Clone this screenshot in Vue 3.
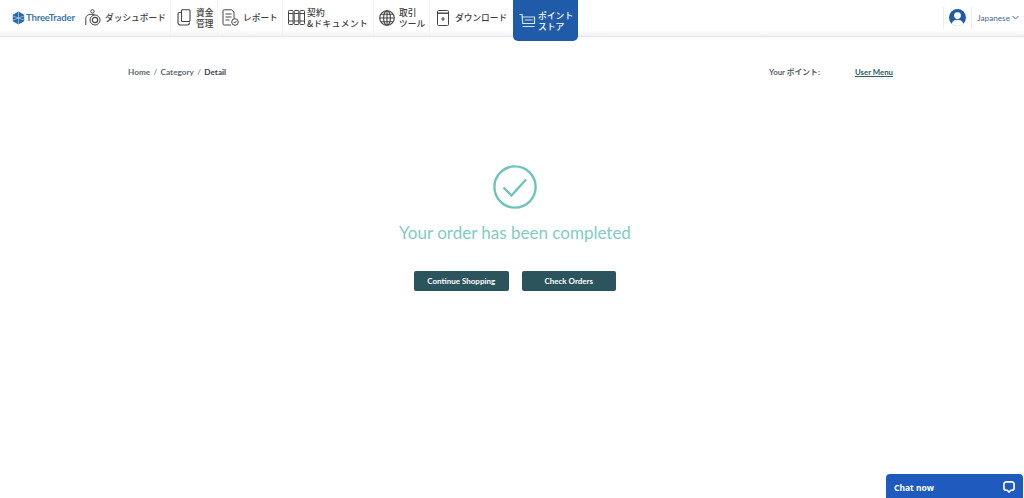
<script setup>
const crumbs = ['Home', 'Category', 'Detail']
</script>

<template>
  <div class="page">
    <header class="topbar">
      <div class="logo">
        <svg width="13" height="14" viewBox="0 0 13 14">
          <path d="M6.5 .5 12.2 3.7V10.3L6.5 13.5 .8 10.3V3.7Z" fill="#2c6aa6" />
          <path d="M6.5 .5V13.5M.8 5 12.2 9M12.2 5 .8 9" stroke="#cfe0ef" stroke-width=".6" />
        </svg>
        <span>ThreeTrader</span>
      </div>

      <nav class="nav">
        <a class="item dash">
          <svg width="16" height="17" viewBox="0 0 16 17" fill="none" stroke="#444" stroke-width="1">
            <circle cx="10" cy="11" r="5" />
            <circle cx="10" cy="11" r="2.7" stroke-width="1.2" />
            <circle cx="7.5" cy="2.4" r="1.7" />
            <path d="M.8 16V9.5C.8 6.8 3 5.4 5.8 5.4H9.5" />
          </svg>
          <span>ダッシュボード</span>
        </a>
        <a class="item funds">
          <svg width="14" height="17" viewBox="0 0 14 17" fill="none" stroke="#444" stroke-width="1.1">
            <path d="M4.5 3.5H2.5A1.5 1.5 0 0 0 1 5V13.5A2.5 2.5 0 0 0 3.5 16H10A2.5 2.5 0 0 0 12.5 13.5" />
            <path d="M4.5 1.5A1 1 0 0 1 5.5 .8H12A1 1 0 0 1 13 1.8V11.5A1 1 0 0 1 12 12.5H5.5A1 1 0 0 1 4.5 11.5Z" />
          </svg>
          <span class="two">資金<br />管理</span>
        </a>
        <a class="item report">
          <svg width="17" height="17" viewBox="0 0 17 17" fill="none" stroke="#444" stroke-width="1">
            <path d="M12 9.5V3L9.5 .8H2.2A1.2 1.2 0 0 0 1 2V14.8A1.2 1.2 0 0 0 2.2 16H9" />
            <path d="M3.5 5H9.5M3.5 8H9.5M3.5 11H7.5" />
            <circle cx="13" cy="13" r="3.3" />
            <path d="M11.6 13 12.7 14.1 14.5 12" />
          </svg>
          <span>レポート</span>
        </a>
        <a class="item docs">
          <svg width="17" height="15" viewBox="0 0 17 15" fill="none" stroke="#444" stroke-width="1">
            <rect x=".5" y=".5" width="4.6" height="14" rx=".8" />
            <rect x="6.2" y=".5" width="4.6" height="14" rx=".8" />
            <rect x="11.9" y=".5" width="4.6" height="14" rx=".8" />
            <path d="M.5 3.5H5M6.2 3.5H10.8M11.9 3.5H16.5M.5 11H5M6.2 11H10.8M11.9 11H16.5" />
          </svg>
          <span class="two spaced">契約<br />&amp;ドキュメント</span>
        </a>
        <a class="item tools">
          <svg width="16" height="16" viewBox="0 0 16 16" fill="none" stroke="#444" stroke-width="1.1">
            <circle cx="8" cy="8" r="7.3" />
            <ellipse cx="8" cy="8" rx="3.4" ry="7.3" />
            <path d="M8 .7V15.3M.7 8H15.3M1.8 4.2H14.2M1.8 11.8H14.2" />
          </svg>
          <span class="two">取引<br />ツール</span>
        </a>
        <a class="item download">
          <svg width="12" height="16" viewBox="0 0 12 16" fill="none" stroke="#444" stroke-width="1">
            <rect x=".5" y=".5" width="11" height="15" rx="1" />
            <path d="M.5 3.2H11.5" stroke-width="1.4" />
            <path d="M6 7V11M4.2 9H7.8" />
          </svg>
          <span>ダウンロード</span>
        </a>
        <a class="store">
          <svg width="17" height="15" viewBox="0 0 17 15" fill="none" stroke="#d8e6f5" stroke-width="1.2">
            <path d="M.5 1.5H3L3.8 10.5H15.5V4H3.2" />
            <path d="M5.8 7H13.5M3.5 13.5H15.5" />
          </svg>
          <span>ポイント<br />ストア</span>
        </a>
      </nav>

      <div class="account">
        <span class="avatar">
          <svg width="17" height="17" viewBox="0 0 18 18">
            <circle cx="9" cy="9" r="9" fill="#1f5ba8" />
            <circle cx="9" cy="7" r="3.6" fill="#fff" />
            <path d="M2.8 15.5C4 12.2 6.3 11.4 9 11.4S14 12.2 15.2 15.5A9 9 0 0 1 2.8 15.5Z" fill="#fff" />
          </svg>
        </span>
        <span class="lang">Japanese</span>
        <svg class="chev" width="7" height="5" viewBox="0 0 7 5" fill="none" stroke="#4a6a8c" stroke-width="1">
          <path d="M.5 1 3.5 4 6.5 1" />
        </svg>
      </div>
    </header>

    <div class="subbar">
      <div class="crumbs">
        <template v-for="(c, i) in crumbs" :key="c">
          <span :class="{ current: i === crumbs.length - 1 }">{{ c }}</span>
          <span v-if="i < crumbs.length - 1" class="slash">/</span>
        </template>
      </div>
      <div class="points">
        <span>Your ポイント:</span>
        <a class="menu">User Menu</a>
      </div>
    </div>

    <main class="done">
      <svg width="44" height="44" viewBox="0 0 44 44" fill="none" stroke="#6fc4ba">
        <circle cx="22" cy="22" r="20.6" stroke-width="2.4" />
        <path d="M10.5 22.5 18.5 30.5 33 14.5" stroke-width="2.4" />
      </svg>
      <h1>Your order has been completed</h1>
      <div class="actions">
        <button>Continue Shopping</button>
        <button>Check Orders</button>
      </div>
    </main>

    <div class="chat">
      <span>Chat now</span>
      <svg width="12" height="12" viewBox="0 0 13 13" fill="none" stroke="#fff" stroke-width="1.8">
        <path d="M3.5 1H9.5A2.5 2.5 0 0 1 12 3.5V7.5A2.5 2.5 0 0 1 9.5 10H8.5L6.5 12 4.5 10H3.5A2.5 2.5 0 0 1 1 7.5V3.5A2.5 2.5 0 0 1 3.5 1Z" />
      </svg>
    </div>
  </div>
</template>

<style>
body {
  background: #fff;
  overflow: hidden;
}
</style>

<style scoped>
.page {
  position: relative;
  height: 498px;
  overflow: hidden;
  font-family: Lato, "Noto Sans CJK JP", sans-serif;
  color: #444;
}

.topbar {
  display: flex;
  align-items: flex-start;
  height: 36px;
  padding-left: 12px;
  background: linear-gradient(#fff 84%, #f1f2f4);
  box-shadow: 0 1px 1px #e6e8ea;
}

.logo {
  display: flex;
  align-items: center;
  width: 73px;
  height: 35px;
  flex: none;
  gap: 1px;
  font-size: 9.6px;
  font-weight: 700;
  letter-spacing: -0.2px;
  color: #3f79ad;
}

.nav {
  display: flex;
  height: 36px;
}

.item {
  display: flex;
  align-items: center;
  height: 35px;
  font-family: "Noto Sans CJK JP", sans-serif;
  font-size: 8.7px;
  font-weight: 500;
  color: #3c3c3c;
  border-right: 1px solid #f2f2f2;
  white-space: nowrap;
  box-sizing: border-box;
}

.two {
  line-height: 11px;
}

.spaced {
  letter-spacing: 0.4px;
}

.dash { width: 86px; gap: 4px; }
.funds { width: 47px; padding-left: 6px; gap: 5px; }
.report { width: 65px; padding-left: 4px; gap: 4px; }
.docs { width: 91px; padding-left: 5px; gap: 2px; }
.tools { width: 56px; padding-left: 5px; gap: 4px; }
.download { width: 83px; padding-left: 7px; gap: 6px; border-right: 0; }

.store {
  display: flex;
  align-items: center;
  gap: 2px;
  width: 65px;
  height: 41px;
  padding-left: 6px;
  box-sizing: border-box;
  background: #1f5ba8;
  border-radius: 0 0 5px 5px;
  font-family: "Noto Sans CJK JP", sans-serif;
  font-size: 8.8px;
  font-weight: 500;
  line-height: 11px;
  color: #fff;
  white-space: nowrap;
}

.account {
  display: flex;
  align-items: center;
  height: 35px;
  margin-left: auto;
  padding-right: 5px;
}

.avatar {
  display: flex;
  align-items: center;
  height: 22px;
  padding: 0 5px;
  border-left: 1px solid #ececec;
  border-right: 1px solid #ececec;
}

.lang {
  margin-left: 5px;
  font-size: 8.2px;
  color: #4a6a8c;
}

.chev {
  margin-left: 2px;
}

.subbar {
  display: flex;
  justify-content: space-between;
  align-items: center;
  height: 14px;
  margin-top: 29px;
  padding: 0 131px 0 128px;
  font-size: 8.2px;
  font-weight: 700;
  line-height: 14px;
  color: #5d6970;
}

.crumbs {
  display: flex;
  gap: 3.4px;
}

.crumbs .current {
  color: #3c4449;
}

.slash {
  font-weight: 400;
}

.points {
  display: flex;
  gap: 35px;
  color: #5a6267;
  font-size: 7.8px;
}

.menu {
  color: #2f5d62;
  text-decoration: underline;
}

.done {
  display: flex;
  flex-direction: column;
  align-items: center;
  padding: 86px 0 0 6px;
}

.done h1 {
  margin: 12px 0 0;
  font-size: 17px;
  font-weight: 400;
  line-height: 24px;
  color: #7fcdc3;
}

.actions {
  display: flex;
  gap: 13px;
  margin-top: 26px;
}

.actions button {
  width: 94.5px;
  height: 20px;
  padding: 0;
  border: 0;
  border-radius: 2px;
  background: #2b545c;
  font-family: Lato, sans-serif;
  font-size: 8px;
  font-weight: 700;
  color: #fff;
}

.chat {
  position: absolute;
  right: 1px;
  bottom: 0;
  display: flex;
  justify-content: space-between;
  align-items: center;
  width: 137px;
  height: 24px;
  padding: 2px 8px 0;
  box-sizing: border-box;
  background: #1f5bbf;
  border-radius: 4px 4px 0 0;
  font-family: "Noto Sans", sans-serif;
  font-size: 8.5px;
  font-weight: 700;
  color: #fff;
}
</style>
